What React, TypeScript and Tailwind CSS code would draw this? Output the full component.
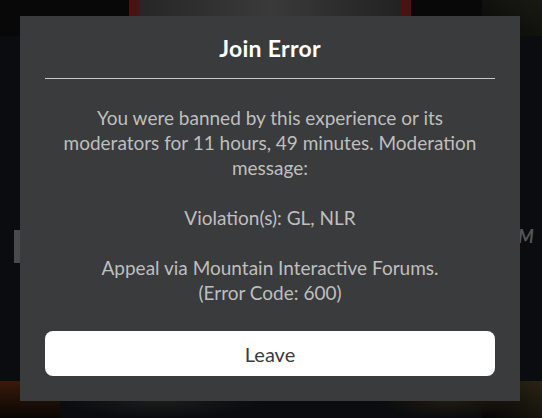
import React from 'react';

const lines = [
  ['You were banned by this experience or its', 'moderators for 11 hours, 49 minutes. Moderation', 'message:'],
  ['Violation(s): GL, NLR'],
  ['Appeal via Mountain Interactive Forums.', '(Error Code: 600)'],
];

export default function App() {
  return (
    <div
      className="relative w-[542px] h-[418px] overflow-hidden bg-[#0b0c0f]"
      style={{ fontFamily: '"Source Sans Pro", Lato, "Noto Sans", sans-serif' }}
    >
      {/* game scene behind the overlay */}
      <div className="absolute left-0 top-0 w-full h-[36px] bg-[#080808]" />
      <div className="absolute right-0 top-0 w-[60px] h-[36px] bg-gradient-to-bl from-[#1a1a14] to-transparent" />
      <div className="absolute left-[129px] top-0 w-[282px] h-[20px] border-x-[10px] border-[#4a1212] bg-gradient-to-r from-[#262626] via-[#3a3a3a] to-[#222]" />
      <div className="absolute left-[14px] top-[230px] w-[10px] h-[33px] bg-[#4a4a4a] border-r-2 border-[#2e2e2e]" />
      <div className="absolute left-[518px] top-[227px] text-[18px] font-bold italic text-[#555] leading-none">M</div>
      <div className="absolute left-0 top-[381px] w-[60px] h-[37px] bg-gradient-to-b from-[#3a1a0a] to-[#0a0604]" />
      <div className="absolute right-0 top-[381px] w-[60px] h-[37px] bg-gradient-to-bl from-[#2a2414] to-[#060606]" />
      <div className="absolute left-[60px] top-[401px] w-[200px] h-[17px] bg-[radial-gradient(ellipse_at_top,#1c1c1c,transparent_70%)]" />
      <div className="absolute left-[380px] top-[401px] w-[140px] h-[17px] bg-[radial-gradient(ellipse_at_top,#1f1b10,transparent_70%)]" />

      {/* dialog */}
      <div className="relative ml-[20px] mt-[16px] w-[500px] h-[385px] bg-[#393b3d] px-[25px] pt-[17px] pb-[25px] flex flex-col">
        <h1 className="text-center text-white text-[23px] leading-[30px] font-bold tracking-[0.3px]">Join Error</h1>
        <div className="mt-[15px] h-px bg-[#c8c8c8]" />
        <div className="mt-[26px] text-center text-[#bfbfbf] text-[19px] leading-[25px]">
          {lines.map((group, i) => (
            <p key={i} className={i > 0 ? 'mt-[25px]' : ''}>
              {group.map((l) => (
                <span key={l} className="block">{l}</span>
              ))}
            </p>
          ))}
        </div>
        <button className="mt-[26px] h-[45px] w-full rounded-[8px] bg-white text-[#393b3d] text-[20px]">
          Leave
        </button>
      </div>
    </div>
  );
}
